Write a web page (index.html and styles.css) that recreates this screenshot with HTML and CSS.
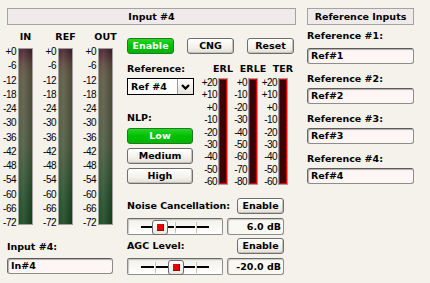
FILE: index.html
```html
<!DOCTYPE html>
<html lang="en">
<head>
    <meta charset="UTF-8">
    <title>Input #4</title>
    <link rel="stylesheet" href="styles.css">
</head>
<body>
    <div class="app">
        <section class="panel main-panel">
            <div class="title-bar">Input #4</div>
            <div class="main-body">
                <div class="meters-col">
                    <div class="meters">
                        <div class="meter">
                            <div class="meter-name">IN</div>
                            <div class="meter-row">
                                <div class="scale">
                                    <span>+0</span><span>-6</span><span>-12</span><span>-18</span><span>-24</span><span>-30</span><span>-36</span><span>-42</span><span>-48</span><span>-54</span><span>-60</span><span>-66</span><span>-72</span>
                                </div>
                                <div class="level-bar"></div>
                            </div>
                        </div>
                        <div class="meter">
                            <div class="meter-name">REF</div>
                            <div class="meter-row">
                                <div class="scale">
                                    <span>+0</span><span>-6</span><span>-12</span><span>-18</span><span>-24</span><span>-30</span><span>-36</span><span>-42</span><span>-48</span><span>-54</span><span>-60</span><span>-66</span><span>-72</span>
                                </div>
                                <div class="level-bar"></div>
                            </div>
                        </div>
                        <div class="meter">
                            <div class="meter-name">OUT</div>
                            <div class="meter-row">
                                <div class="scale">
                                    <span>+0</span><span>-6</span><span>-12</span><span>-18</span><span>-24</span><span>-30</span><span>-36</span><span>-42</span><span>-48</span><span>-54</span><span>-60</span><span>-66</span><span>-72</span>
                                </div>
                                <div class="level-bar"></div>
                            </div>
                        </div>
                    </div>
                    <div class="field-label input-label">Input #4:</div>
                    <div class="text-field input-field">In#4</div>
                </div>

                <div class="controls">
                    <div class="button-row">
                        <button class="btn btn-on">Enable</button>
                        <button class="btn">CNG</button>
                        <button class="btn">Reset</button>
                    </div>

                    <div class="mid-grid">
                        <div class="mid-left">
                            <div class="field-label">Reference:</div>
                            <div class="select">
                                <span class="select-text">Ref #4</span>
                                <span class="select-arrow">
                                    <svg width="9" height="6" viewBox="0 0 9 6"><polyline points="1,1 4.5,4.6 8,1" fill="none" stroke="#000" stroke-width="2.2"/></svg>
                                </span>
                            </div>
                            <div class="field-label nlp-label">NLP:</div>
                            <button class="btn btn-wide btn-on">Low</button>
                            <button class="btn btn-wide">Medium</button>
                            <button class="btn btn-wide">High</button>
                        </div>

                        <div class="erl-meters">
                            <div class="erl">
                                <div class="erl-name">ERL</div>
                                <div class="erl-row">
                                    <div class="erl-scale">
                                        <span>+20</span><span>+10</span><span>+0</span><span>-10</span><span>-20</span><span>-30</span><span>-40</span><span>-50</span><span>-60</span>
                                    </div>
                                    <div class="erl-bar"></div>
                                </div>
                            </div>
                            <div class="erl">
                                <div class="erl-name">ERLE</div>
                                <div class="erl-row">
                                    <div class="erl-scale">
                                        <span>+0</span><span>-10</span><span>-20</span><span>-30</span><span>-40</span><span>-50</span><span>-60</span><span>-70</span><span>-80</span>
                                    </div>
                                    <div class="erl-bar"></div>
                                </div>
                            </div>
                            <div class="erl">
                                <div class="erl-name">TER</div>
                                <div class="erl-row">
                                    <div class="erl-scale">
                                        <span>+20</span><span>+10</span><span>+0</span><span>-10</span><span>-20</span><span>-30</span><span>-40</span><span>-50</span><span>-60</span>
                                    </div>
                                    <div class="erl-bar"></div>
                                </div>
                            </div>
                        </div>
                    </div>

                    <div class="ctrl-row nc-row">
                        <span class="field-label">Noise Cancellation:</span>
                        <button class="btn">Enable</button>
                    </div>
                    <div class="slider-row">
                        <div class="slider">
                            <span class="tick tick-1"></span>
                            <span class="tick tick-2"></span>
                            <span class="tick tick-3"></span>
                            <div class="track"></div>
                            <span class="thumb" style="left: 24px;"><i></i></span>
                        </div>
                        <div class="value-box">6.0 dB</div>
                    </div>

                    <div class="ctrl-row agc-row">
                        <span class="field-label">AGC Level:</span>
                        <button class="btn">Enable</button>
                    </div>
                    <div class="slider-row">
                        <div class="slider">
                            <span class="tick tick-1"></span>
                            <span class="tick tick-2"></span>
                            <span class="tick tick-3"></span>
                            <div class="track"></div>
                            <span class="thumb" style="left: 40px;"><i></i></span>
                        </div>
                        <div class="value-box">-20.0 dB</div>
                    </div>
                </div>
            </div>
        </section>

        <section class="panel ref-panel">
            <div class="title-bar">Reference Inputs</div>
            <div class="field-label ref-label first">Reference #1:</div>
            <div class="text-field ref-field first">Ref#1</div>
            <div class="field-label ref-label">Reference #2:</div>
            <div class="text-field ref-field">Ref#2</div>
            <div class="field-label ref-label">Reference #3:</div>
            <div class="text-field ref-field">Ref#3</div>
            <div class="field-label ref-label">Reference #4:</div>
            <div class="text-field ref-field">Ref#4</div>
        </section>
    </div>
</body>
</html>
```

FILE: styles.css
```css
body {
    margin: 0;
    padding: 8px 7px;
    background: #f4f2ea;
    color: #000;
    font-family: "DejaVu Sans", sans-serif;
    font-size: 9.5px;
    font-weight: bold;
    line-height: 12px;
}
.app {
    display: flex;
    gap: 11px;
}
.main-panel {
    width: 289px;
}
.ref-panel {
    width: 107px;
}
.title-bar {
    box-sizing: border-box;
    height: 17px;
    border: 1px solid #a3a3a3;
    background: #f1eaea;
    text-align: center;
    line-height: 15px;
}
.main-body {
    display: flex;
    gap: 14px;
}

/* level meters */
.meters-col {
    width: 106px;
}
.meters {
    display: flex;
    gap: 10px;
    margin-left: -4px;
    margin-top: 6px;
}
.meter {
    width: 30px;
}
.meter-name {
    margin-left: 15px;
    width: 15px;
    display: flex;
    justify-content: center;
    white-space: nowrap;
}
.meter-row {
    display: flex;
    gap: 2px;
    margin-top: 5px;
    align-items: flex-start;
}
.scale, .erl-scale {
    display: flex;
    flex-direction: column;
    justify-content: space-between;
    align-items: flex-end;
    font-family: "Liberation Sans", Arial, sans-serif;
    font-weight: normal;
    font-size: 10px;
    letter-spacing: -0.5px;
    line-height: 11px;
}
.scale {
    width: 13px;
    height: 182px;
    margin: -2px 0 -3px;
}
.level-bar {
    box-sizing: border-box;
    width: 15px;
    height: 177px;
    border: 1px solid #9e9e9e;
    background:
        linear-gradient(90deg, rgba(255,255,255,0.05) 0%, rgba(255,255,255,0.1) 35%, rgba(0,0,0,0.14) 100%),
        linear-gradient(180deg, #43202b 0%, #4d2c32 3%, #5a483c 9%, #5a5640 15%, #555840 35%, #4b5a3d 55%, #30532f 75%, #1e4a25 90%, #19441f 100%);
}

.field-label {
    white-space: nowrap;
}
.input-label {
    margin-top: 16px;
}
.text-field {
    box-sizing: border-box;
    height: 16px;
    padding: 0 3px;
    line-height: 14px;
    border: 1px solid #8c8c8c;
    border-top-color: #5a5a5a;
    border-left-color: #6a6a6a;
    border-radius: 3px;
    background: #fdf6f5;
    box-shadow: inset 1px 1px 1px rgba(0,0,0,0.3);
}
.input-field {
    margin-top: 5px;
}

/* controls */
.controls {
    width: 167px;
}
.button-row {
    display: flex;
    justify-content: space-between;
    margin-top: 13px;
}
.btn {
    box-sizing: border-box;
    width: 47px;
    height: 16px;
    padding: 0;
    font: inherit;
    line-height: 14px;
    color: #000;
    border: 1px solid #6e6e6e;
    border-radius: 3px;
    background: linear-gradient(#ffffff, #f3f1ea 60%, #e2dfd6);
    box-shadow: inset -1px -1px 0 #c4c1b8;
}
.btn-on {
    color: #fff;
    border-color: #1f7a1f;
    background: linear-gradient(#2ad52a, #00c000 50%, #00b300);
    box-shadow: none;
}
.btn-wide {
    display: block;
    width: 66px;
    margin-top: 4px;
}
.mid-grid {
    display: flex;
    gap: 6px;
    margin-top: 9px;
    align-items: flex-start;
}
.mid-left {
    width: 67px;
}
.select {
    box-sizing: border-box;
    display: flex;
    height: 17px;
    margin-top: 3px;
    border: 1px solid #000;
    background: #fff;
}
.select-text {
    flex: 1;
    padding-left: 3px;
    line-height: 15px;
}
.select-arrow {
    width: 15px;
    display: flex;
    align-items: center;
    justify-content: center;
    border-left: 1px solid #9a9a9a;
    background: linear-gradient(#ffffff, #e6e3da);
}
.nlp-label {
    margin-top: 17px;
}

.erl-meters {
    display: flex;
    gap: 2px;
}
.erl {
    width: 28px;
}
.erl-name {
    margin-left: 18px;
    width: 10px;
    display: flex;
    justify-content: center;
    white-space: nowrap;
}
.erl-row {
    display: flex;
    gap: 1px;
    margin-top: 3px;
    align-items: flex-start;
}
.erl-scale {
    width: 17px;
    height: 110px;
    margin: -1px 0 -2px;
    letter-spacing: -0.6px;
}
.erl-bar {
    box-sizing: border-box;
    width: 10px;
    height: 107px;
    border: 1px solid #a0a0a0;
    background: #3a0404;
    box-shadow: inset 0 0 0 1px #e00000;
}

.ctrl-row {
    display: flex;
    justify-content: space-between;
    align-items: center;
    width: 157px;
    height: 16px;
}
.nc-row {
    margin-top: 13px;
}
.agc-row {
    margin-top: 3px;
}
.slider-row {
    display: flex;
    gap: 4px;
    width: 157px;
    margin-top: 4px;
}
.slider {
    position: relative;
    box-sizing: border-box;
    width: 96px;
    height: 17px;
    padding: 0 13px;
    display: flex;
    align-items: center;
    border: 1px solid #8c8c8c;
    border-top-color: #6a6a6a;
    border-radius: 2px;
    background: linear-gradient(#f2f0ea, #ffffff);
    box-shadow: inset 1px 1px 1px rgba(0,0,0,0.2);
}
.track {
    flex: 1;
    height: 2px;
    background: #000;
}
.tick {
    position: absolute;
    top: 3px;
    width: 1px;
    height: 11px;
    background: #fff;
    box-shadow: 1px 0 0 #c6c3bb;
}
.tick-1 { left: 26px; }
.tick-2 { left: 46px; }
.tick-3 { left: 67px; }
.thumb {
    position: absolute;
    top: 1px;
    box-sizing: border-box;
    width: 16px;
    height: 15px;
    display: flex;
    align-items: center;
    justify-content: center;
    border: 1px solid #6a6a6a;
    border-radius: 3px;
    background: linear-gradient(#ffffff, #ebe8e0);
}
.thumb i {
    width: 7px;
    height: 7px;
    background: #e80000;
    box-shadow: inset -1px -1px 0 #a00000;
}
.value-box {
    box-sizing: border-box;
    width: 57px;
    height: 17px;
    padding-right: 2px;
    text-align: right;
    line-height: 15px;
    border: 1px solid #8c8c8c;
    border-top-color: #6a6a6a;
    border-radius: 3px;
    background: #faf8f3;
    box-shadow: inset 1px 1px 1px rgba(0,0,0,0.2);
}

/* reference inputs */
.ref-label {
    margin-top: 9px;
}
.ref-label.first {
    margin-top: 5px;
}
.ref-field {
    margin-top: 3px;
}
.ref-field.first {
    margin-top: 6px;
}
```
